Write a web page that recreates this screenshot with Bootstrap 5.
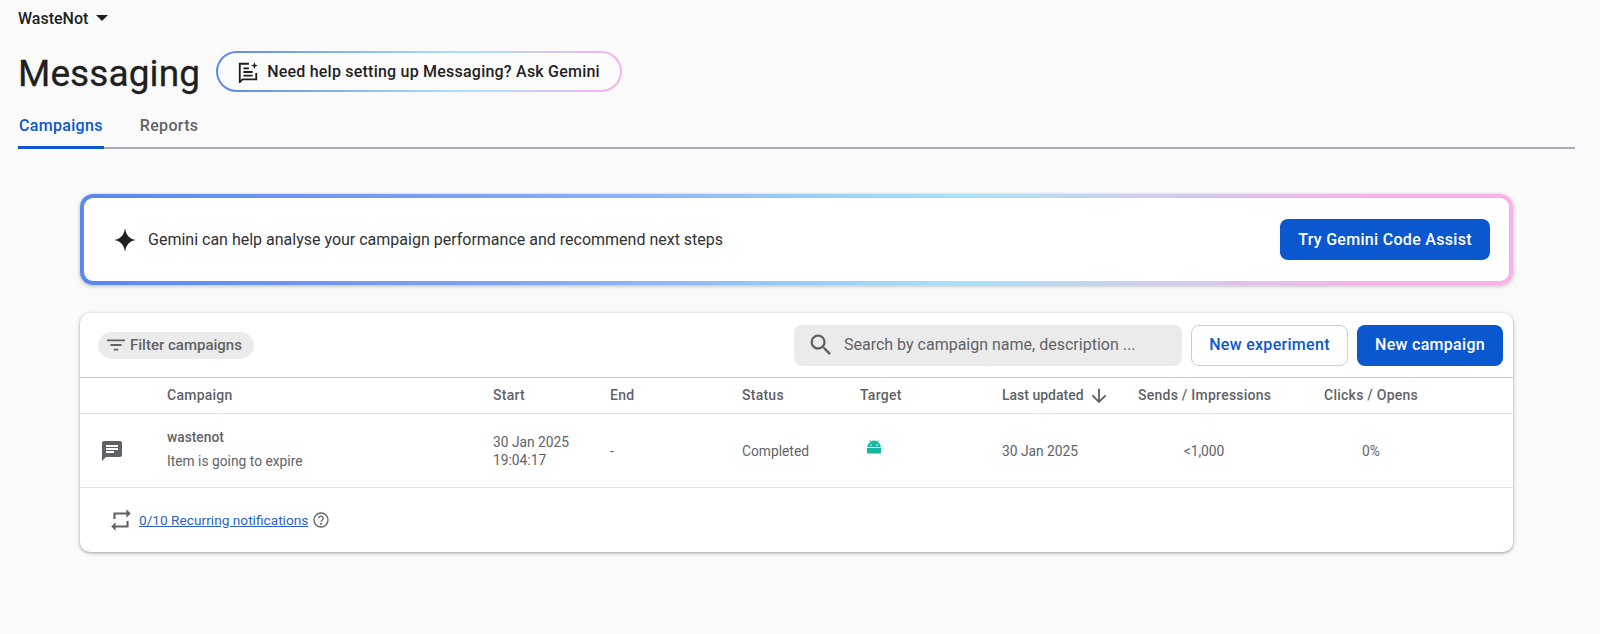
<!DOCTYPE html>
<html lang="en">
<head>
    <meta charset="UTF-8">
    <meta name="viewport" content="width=device-width, initial-scale=1.0">
    <title>Messaging</title>
    <link href="https://cdn.jsdelivr.net/npm/bootstrap@5.3.0/dist/css/bootstrap.min.css" rel="stylesheet">
    <style>
        body {
            background-color: #fafafa;
            color: #1f1f1f;
            font-family: Roboto, "Liberation Sans", sans-serif;
            font-size: 14px;
        }
        .page-head {
            padding: 10px 25px 0 18px;
        }
        .app-switch {
            font-size: 16px;
            font-weight: 500;
            line-height: 18px;
            height: 18px;
        }
        .app-caret {
            width: 0;
            height: 0;
            margin-left: 8px;
            margin-top: -3px;
            border-left: 6px solid transparent;
            border-right: 6px solid transparent;
            border-top: 6px solid #1f1f1f;
        }
        .title-row {
            margin-top: 23px;
        }
        .page-title {
            font-size: 37px;
            font-weight: 400;
            line-height: 40px;
            padding-top: 3px;
            margin: 0 16px 0 0;
            letter-spacing: .1px;
            -webkit-text-stroke: .3px #1f1f1f;
        }
        .gemini-pill {
            width: 406px;
            height: 41px;
            border: 2px solid transparent;
            border-radius: 21px;
            background: linear-gradient(#fcfcfc, #fcfcfc) padding-box,
                linear-gradient(90deg, #5b87e8 0%, #a9e3f8 60%, #f9b2e8 100%) border-box;
            font-size: 16px;
            font-weight: 500;
            letter-spacing: .22px;
            color: #1f1f1f;
            padding: 0 0 0 19px;
            gap: 8px;
            white-space: nowrap;
        }
        .tab-bar {
            margin-top: 13px;
            height: 42px;
            border-bottom: 2px solid #a9aabd;
            gap: 35px;
        }
        .tab-bar .nav-link {
            padding: 0 1px;
            height: 42px;
            line-height: 38px;
            font-size: 16px;
            font-weight: 500;
            letter-spacing: .32px;
            color: #5f6368;
        }
        .tab-bar .nav-link.active {
            color: #0b57d0;
            border-bottom: 3px solid #0b57d0;
        }
        .page-body {
            padding: 45px 87px 40px 80px;
        }
        .gemini-banner {
            height: 91px;
            border: 4px solid transparent;
            border-radius: 13px;
            background: linear-gradient(#fff, #fff) padding-box,
                linear-gradient(90deg, #5b87ee 0%, #7ea5f4 30%, #a9e3f8 62%, #f9b2e8 90%, #f9b2e8 100%) border-box;
            box-shadow: 0 1px 4px rgba(60, 64, 67, .35);
            padding: 0 19px 0 30px;
        }
        .banner-text {
            font-size: 16px;
            color: #303134;
            margin-left: 12px;
        }
        .btn-solid {
            background-color: #0b57d0;
            color: #fff;
            border: 0;
            border-radius: 8px;
            height: 41px;
            font-size: 16px;
            font-weight: 500;
            letter-spacing: .3px;
            padding: 0;
        }
        .btn-solid:hover {
            background-color: #0b57d0;
            color: #fff;
        }
        .btn-outline {
            background-color: #fff;
            color: #0b57d0;
            border: 1px solid #c9ccd6;
            border-radius: 8px;
            height: 41px;
            font-size: 16px;
            font-weight: 500;
            letter-spacing: .3px;
            padding: 0;
        }
        .campaign-card {
            margin-top: 28px;
            border: 0;
            border-radius: 10px;
            background-color: #fff;
            box-shadow: 0 1px 3px rgba(60, 64, 67, .4), 0 1px 5px rgba(60, 64, 67, .15);
            height: 239px;
        }
        .card-tools {
            height: 64px;
            padding: 0 10px 0 18px;
        }
        .filter-chip {
            height: 27px;
            width: 156px;
            border-radius: 14px;
            background-color: #ebebeb;
            font-size: 15px;
            font-weight: 500;
            color: #5f6368;
            padding-left: 8px;
            gap: 4px;
            white-space: nowrap;
        }
        .search-box {
            width: 388px;
            height: 41px;
            border-radius: 8px;
            background-color: #ebebeb;
            color: #5f6368;
            font-size: 16px;
            padding-left: 13px;
            gap: 9px;
            margin-right: 9px;
        }
        .campaign-table {
            table-layout: fixed;
            margin: 0;
            width: 1433px;
            font-size: 13.8px;
            color: #5f6368;
        }
        .campaign-table > thead > tr > th {
            height: 36px;
            padding: 0;
            font-size: 14px;
            font-weight: 500;
            letter-spacing: .25px;
            color: #5f6368;
            border-top: 1px solid #c4c7cf;
            border-bottom: 1px solid #e3e3e3;
            vertical-align: middle;
            background: transparent;
            white-space: nowrap;
        }
        .campaign-table > thead > tr > th.sort-head {
            letter-spacing: 0;
        }
        .campaign-table > tbody > tr > td {
            height: 74px;
            padding: 1px 0 0;
            color: #5f6368;
            border-bottom: 1px solid #e3e3e3;
            vertical-align: middle;
            background: transparent;
            line-height: 18px;
        }
        .campaign-table > tbody > tr > td.icon-cell {
            padding-left: 20px;
        }
        .campaign-table > tbody > tr > td.pad-sends {
            padding-right: 54px;
            text-align: center;
        }
        .campaign-table > tbody > tr > td.pad-clicks {
            padding-right: 95px;
            text-align: center;
        }
        .campaign-table > tbody > tr > td.name-cell {
            padding-bottom: 5px;
        }
        .campaign-name {
            font-weight: 500;
            margin-bottom: 6px;
        }
        .android-mark {
            display: block;
            margin: -9px 0 0 6px;
        }
        .card-foot {
            height: 64px;
            padding: 0 0 0 28px;
            gap: 5px;
            font-size: 13.7px;
        }
        .card-foot a {
            color: #2b63c4;
        }
    </style>
</head>
<body>

<!-- Header -->
<header class="page-head">
    <div class="app-switch d-flex align-items-center">WasteNot <span class="app-caret"></span></div>
    <div class="title-row d-flex align-items-start">
        <h1 class="page-title">Messaging</h1>
        <button type="button" class="gemini-pill d-flex align-items-center">
            <svg width="22" height="22" viewBox="0 0 24 24" fill="none" stroke="#1f1f1f" stroke-width="2"><path d="M21 13v7H6l-3 3V3h10"/><path d="M7 8h6M7 12h10M7 16h10"/><path d="M19 1l1 3 3 1-3 1-1 3-1-3-3-1 3-1z" fill="#1f1f1f" stroke="none"/></svg>
            <span>Need help setting up Messaging? Ask Gemini</span>
        </button>
    </div>
    <ul class="nav tab-bar">
        <li class="nav-item"><a class="nav-link active" href="#">Campaigns</a></li>
        <li class="nav-item"><a class="nav-link" href="#">Reports</a></li>
    </ul>
</header>

<main class="page-body">
    <!-- Gemini banner -->
    <section class="gemini-banner d-flex align-items-center justify-content-between">
        <div class="d-flex align-items-center">
            <svg width="22" height="24" viewBox="0 0 22 24"><path d="M11 0c1 7 4 11 11 12-7 1-10 5-11 12C10 17 7 13 0 12 7 11 10 7 11 0z" fill="#1f1f1f"/></svg>
            <span class="banner-text">Gemini can help analyse your campaign performance and recommend next steps</span>
        </div>
        <button type="button" class="btn btn-solid" style="width:210px">Try Gemini Code Assist</button>
    </section>

    <!-- Campaigns -->
    <section class="card campaign-card">
        <div class="card-tools d-flex align-items-center justify-content-between">
            <div class="filter-chip d-flex align-items-center">
                <svg width="20" height="20" viewBox="0 0 18 18" fill="#5f6368"><path d="M1 4h16v1.6H1zM4 8.2h10v1.6H4zM7 12.4h4V14H7z"/></svg>
                <span>Filter campaigns</span>
            </div>
            <div class="d-flex align-items-center">
                <div class="search-box d-flex align-items-center">
                    <svg width="28" height="28" viewBox="0 0 24 24" fill="#5f6368"><path d="M15.5 14h-.79l-.28-.27A6.471 6.471 0 0 0 16 9.5 6.5 6.5 0 1 0 9.5 16c1.61 0 3.09-.59 4.23-1.57l.27.28v.79l5 4.99L20.49 19l-4.99-5zm-6 0C7.01 14 5 11.99 5 9.5S7.01 5 9.5 5 14 7.01 14 9.5 11.99 14 9.5 14z"/></svg>
                    <span>Search by campaign name, description ...</span>
                </div>
                <button type="button" class="btn btn-outline" style="width:157px;margin-right:9px">New experiment</button>
                <button type="button" class="btn btn-solid" style="width:146px">New campaign</button>
            </div>
        </div>

        <table class="table campaign-table">
            <colgroup>
                <col style="width:87px"><col style="width:326px"><col style="width:117px"><col style="width:132px"><col style="width:118px"><col style="width:142px"><col style="width:136px"><col style="width:186px"><col style="width:189px">
            </colgroup>
            <thead>
                <tr>
                    <th></th>
                    <th>Campaign</th>
                    <th>Start</th>
                    <th>End</th>
                    <th>Status</th>
                    <th>Target</th>
                    <th class="sort-head">
                        <span class="d-inline-flex align-items-center gap-1">Last updated
                            <svg width="22" height="22" viewBox="0 0 24 24" fill="#5f6368"><path d="M20 12l-1.410-1.410L13 16.170V4h-2v12.170l-5.580-5.590L4 12l8 8 8-8z"/></svg>
                        </span>
                    </th>
                    <th>Sends / Impressions</th>
                    <th>Clicks / Opens</th>
                </tr>
            </thead>
            <tbody>
                <tr>
                    <td class="icon-cell">
                        <svg width="24" height="24" viewBox="0 0 24 24" fill="#5f6368"><path d="M20 2H4c-1.100 0-2 .9-2 2v18l4-4h14c1.100 0 2-.9 2-2V4c0-1.100-.9-2-2-2zM6 9h12v2H6V9zm8 5H6v-2h8v2zm4-6H6V6h12v2z"/></svg>
                    </td>
                    <td class="name-cell">
                        <div class="campaign-name">wastenot</div>
                        <div>Item is going to expire</div>
                    </td>
                    <td>30 Jan 2025<br>19:04:17</td>
                    <td>-</td>
                    <td>Completed</td>
                    <td>
                        <svg class="android-mark" width="16" height="16" viewBox="0 0 16 16" fill="#14b8a0"><path fill-rule="evenodd" d="M1 8a7 7 0 0 1 3.200-5L3.300 1.300l.6-.4.9 1.600a6 6 0 0 1 6.400 0l.9-1.600.6.4L11.800 3A7 7 0 0 1 15 8zM5 5.200a.8.8 0 1 0 0 1.600.8.8 0 0 0 0-1.600zm6 0a.8.8 0 1 0 0 1.600.8.8 0 0 0 0-1.600z"/><path d="M1 9h14v4.500a1 1 0 0 1-1 1H2a1 1 0 0 1-1-1z"/></svg>
                    </td>
                    <td>30 Jan 2025</td>
                    <td class="pad-sends">&lt;1,000</td>
                    <td class="pad-clicks">0%</td>
                </tr>
            </tbody>
        </table>

        <div class="card-foot d-flex align-items-center">
            <svg width="26" height="26" viewBox="0 0 24 24" fill="#5f6368"><path d="M7 7h10v3l4-4-4-4v3H5v6h2V7zm10 10H7v-3l-4 4 4 4v-3h12v-6h-2v4z"/></svg>
            <a href="#">0/10 Recurring notifications</a>
            <svg width="16" height="16" viewBox="0 0 16 16" fill="none" stroke="#5f6368" stroke-width="1.300"><circle cx="8" cy="8" r="7"/><path d="M5.800 6.300a2.200 2.200 0 1 1 3.300 1.900c-.7.400-1.100.8-1.100 1.600"/><circle cx="8" cy="11.800" r=".4" fill="#5f6368"/></svg>
        </div>
    </section>
</main>

<script src="https://cdn.jsdelivr.net/npm/bootstrap@5.3.0/dist/js/bootstrap.bundle.min.js"></script>
</body>
</html>
